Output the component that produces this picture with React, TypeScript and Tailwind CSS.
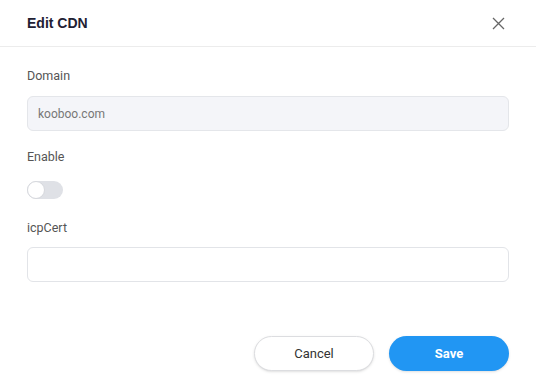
export default function App() {
  return (
    <div className="w-[536px] h-[386px] bg-white font-['Roboto',sans-serif] text-[#555]">
      <div className="h-[47px] px-[27px] flex items-center justify-between border-b border-[#ececec]">
        <h1 className="font-['Liberation_Sans',Arial,sans-serif] font-bold text-[14px] text-[#1f2133]">
          Edit CDN
        </h1>
        <button className="w-[16px] h-[16px] flex items-center justify-center mr-[3px] text-[#666]">
          <svg width="13" height="13" viewBox="0 0 13 13" fill="none" stroke="currentColor" strokeWidth="1.3">
            <path d="M1 1L12 12M12 1L1 12" />
          </svg>
        </button>
      </div>

      <div className="px-[27px] pt-[20px]">
        <label className="block text-[12.5px] leading-[18px]">Domain</label>
        <div className="mt-[11px] h-[35px] rounded-[6px] border border-[#e4e6ea] bg-[#f4f5f9] px-[10px] flex items-center text-[12px] text-[#777]">
          kooboo.com
        </div>

        <label className="block mt-[17px] text-[12.5px] leading-[18px]">Enable</label>
        <div className="mt-[15px] w-[36px] h-[18px] rounded-full bg-[#dfe1e6] relative">
          <span className="absolute left-0 top-0 w-[18px] h-[18px] rounded-full bg-white border border-[#d6d8dd]" />
        </div>

        <label className="block mt-[20px] text-[12.5px] leading-[18px]">icpCert</label>
        <div className="mt-[10px] h-[35px] rounded-[6px] border border-[#e2e4e8] bg-white" />

        <div className="mt-[54px] flex justify-end gap-[15px]">
          <button className="w-[120px] h-[35px] rounded-full border border-[#dcdde0] bg-white text-[13px] text-[#333] shadow-sm">
            Cancel
          </button>
          <button className="w-[120px] h-[35px] rounded-full bg-[#2196f3] text-[13px] font-bold text-white shadow-sm">
            Save
          </button>
        </div>
      </div>
    </div>
  )
}
